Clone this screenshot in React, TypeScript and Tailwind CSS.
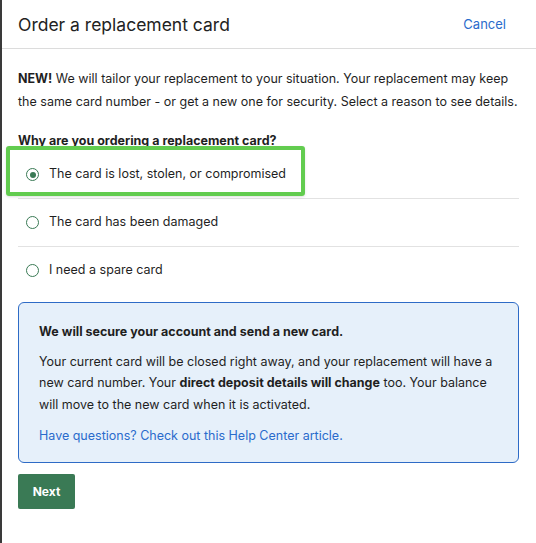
import { useState } from "react";

const reasons = [
  { id: "lost", label: "The card is lost, stolen, or compromised" },
  { id: "damaged", label: "The card has been damaged" },
  { id: "spare", label: "I need a spare card" },
];

function Radio({ checked }: { checked: boolean }) {
  return (
    <span className="flex h-[13px] w-[13px] shrink-0 items-center justify-center rounded-full border-[1.5px] border-[#3a7a55] bg-white">
      {checked ? <span className="h-[6px] w-[6px] rounded-full bg-[#3a7a55]" /> : null}
    </span>
  );
}

export default function App() {
  const [reason, setReason] = useState("lost");

  return (
    <div
      className="min-h-[543px] w-[536px] border-l-2 border-[#3a3a3a] bg-white text-[#1f1f1f]"
      style={{ fontFamily: "Inter, 'Noto Sans', sans-serif" }}
    >
      <div className="flex h-[49px] items-center justify-between border-b border-[#dcdcdc] pl-4 pr-[30px] pt-[2px]">
        <h1 className="text-[17.5px] font-normal text-[#222]">Order a replacement card</h1>
        <button type="button" className="text-[13px] text-[#2a6bcc]">
          Cancel
        </button>
      </div>

      <div className="px-4 pt-[18px]">
        <p className="text-[12.5px] leading-[23px]">
          <span className="font-bold">NEW!</span> We will tailor your replacement to your situation. Your
          replacement may keep the same card number - or get a new one for security. Select a reason to see
          details.
        </p>

        <p className="mt-[20px] text-[12.5px] font-bold leading-[15px]">
          Why are you ordering a replacement card?
        </p>

        <ul className="mt-[3px] mr-[1px]">
          {reasons.map((r, i) => (
            <li
              key={r.id}
              className={`relative ${i < reasons.length - 1 ? "border-b border-[#e2e2e2]" : ""}`}
            >
              {i === 0 ? (
                <span className="pointer-events-none absolute -left-[12px] -top-[5px] h-[50px] w-[299px] rounded-[3px] border-4 border-[#62cc4f] shadow-sm" />
              ) : null}
              <button
                type="button"
                onClick={() => setReason(r.id)}
                className="flex h-[47px] w-full items-center gap-[10px] pl-[8px] text-left text-[12.5px]"
              >
                <Radio checked={reason === r.id} />
                <span>{r.label}</span>
              </button>
            </li>
          ))}
        </ul>

        <div className="mt-[8px] mr-[1px] rounded-[6px] border border-[#2e6bc6] bg-[#e6f0fa] px-5 pb-[16px] pt-[20px] text-[12.5px]">
          <p className="font-bold">We will secure your account and send a new card.</p>
          <p className="mt-[9px] leading-[21.5px]">
            Your current card will be closed right away, and your replacement will have a new card number. Your{" "}
            <span className="font-bold">direct deposit details will change</span> too. Your balance will move
            to the new card when it is activated.
          </p>
          <a href="#" className="mt-[12px] block text-[#2a6bcc]">
            Have questions? Check out this Help Center article.
          </a>
        </div>

        <button
          type="button"
          className="mt-[11px] h-[35px] w-[57px] rounded-[2px] bg-[#3a7a55] text-[12px] font-bold text-white"
        >
          Next
        </button>
      </div>
    </div>
  );
}
